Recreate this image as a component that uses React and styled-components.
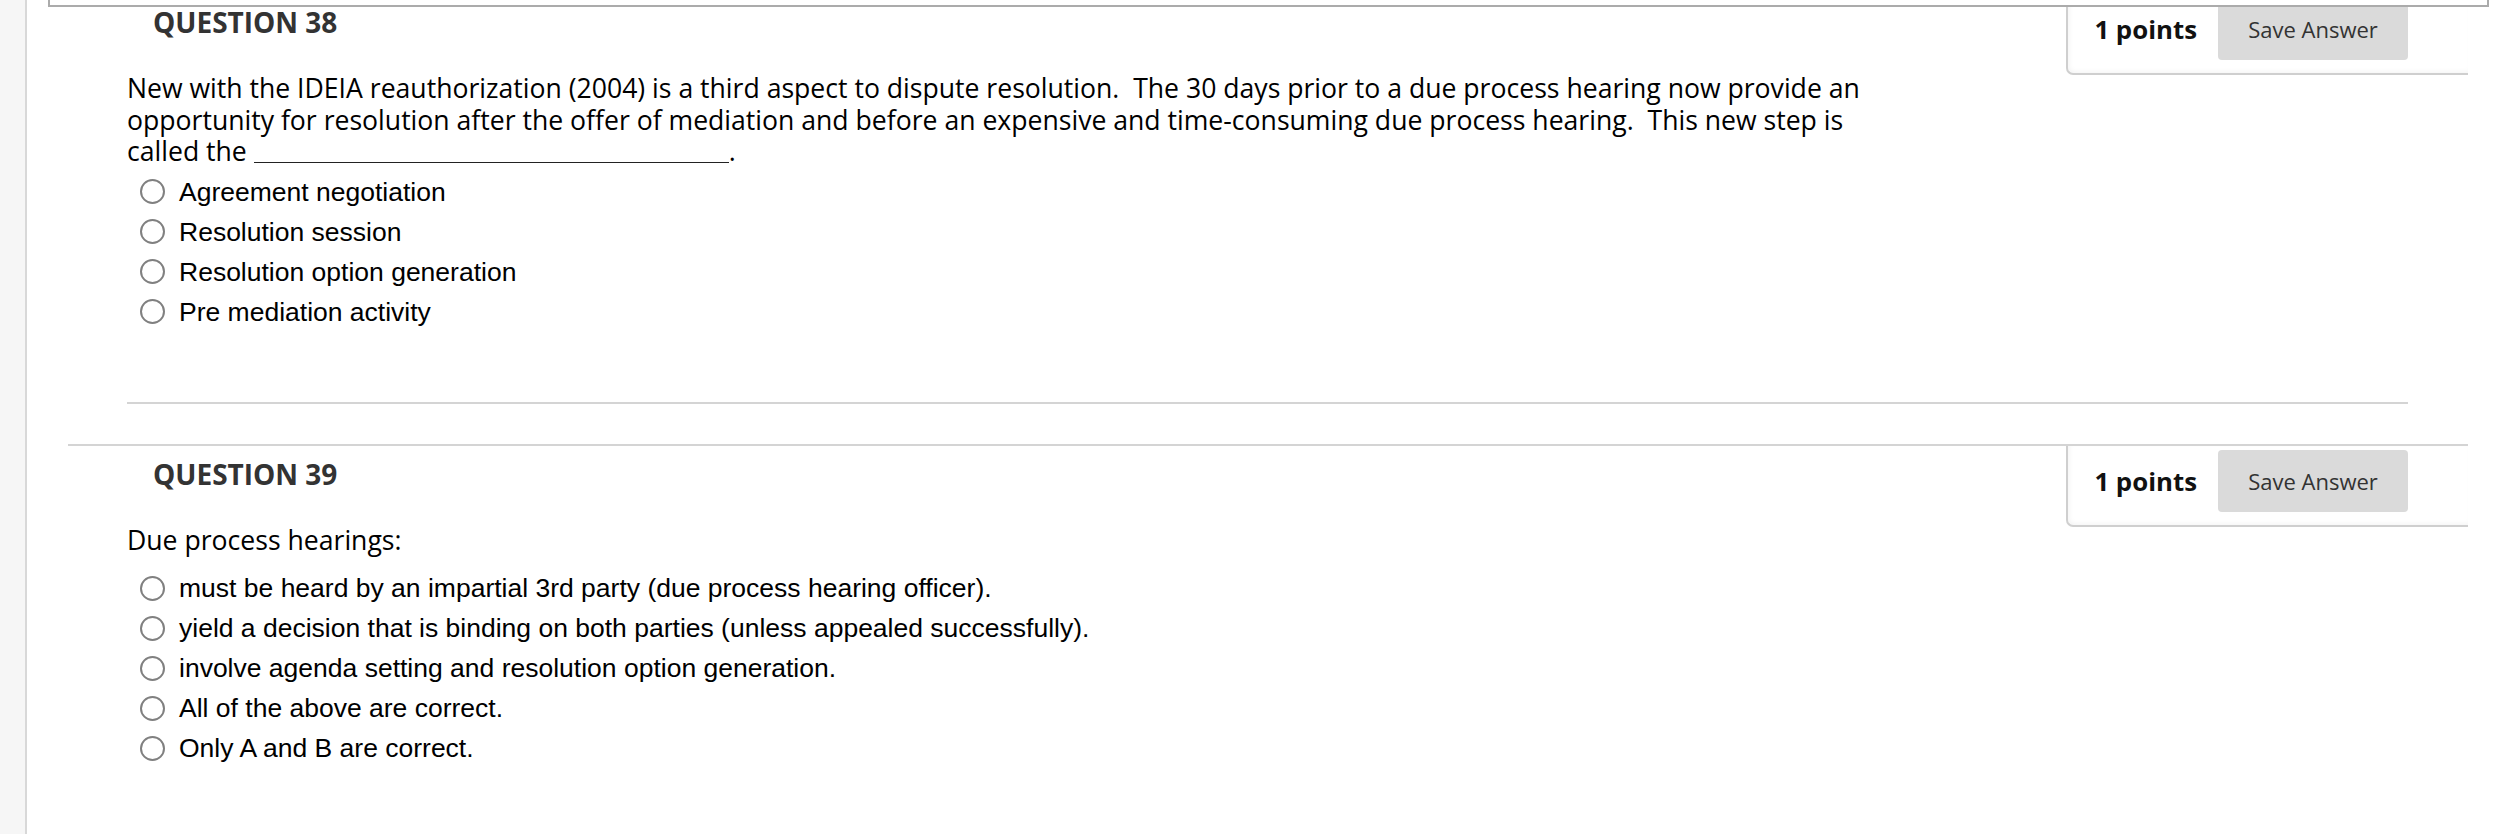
import React from 'react';
import styled, { createGlobalStyle } from 'styled-components';

const GlobalStyle = createGlobalStyle`
    body {
        margin: 0;
        background: #fff;
        overflow: hidden;
    }
    * {
        box-sizing: border-box;
    }
`

const questions = [
    {
        number: 38,
        prompt: (
            <>
                New with the IDEIA reauthorization (2004) is a third aspect to dispute resolution.&nbsp; The 30 days prior to a due process hearing now provide an opportunity for resolution after the offer of mediation and before an expensive and time-consuming due process hearing.&nbsp; This new step is called the <Blank />.
            </>
        ),
        promptGap: 4,
        options: [
            'Agreement negotiation',
            'Resolution session',
            'Resolution option generation',
            'Pre mediation activity',
        ],
    },
    {
        number: 39,
        prompt: 'Due process hearings:',
        promptGap: 12,
        options: [
            'must be heard by an impartial 3rd party (due process hearing officer).',
            'yield a decision that is binding on both parties (unless appealed successfully).',
            'involve agenda setting and resolution option generation.',
            'All of the above are correct.',
            'Only A and B are correct.',
        ],
    },
]

function Blank() {
    return <BlankLine />
}

function Question({ number, prompt, promptGap, options }) {
    return (
        <Section>
            <Header>
                <Heading>QUESTION {number}</Heading>
                <PointsBox>
                    <Points>1 points</Points>
                    <SaveButton>Save Answer</SaveButton>
                </PointsBox>
            </Header>
            <Body>
                <Prompt gap={promptGap}>{prompt}</Prompt>
                <Options>
                    {options.map(option => (
                        <Option key={option}>
                            <Radio />
                            <Label>{option}</Label>
                        </Option>
                    ))}
                </Options>
            </Body>
        </Section>
    )
}

function App() {
    return (
        <Page>
            <GlobalStyle />
            <LeftRail />
            <Main>
                <TopFrame />
                <Content>
                    {questions.map(q => (
                        <Question key={q.number} {...q} />
                    ))}
                </Content>
            </Main>
        </Page>
    )
}

export default App

const Page = styled.div`
    display:flex;
    height:834px;
    overflow:hidden;
`

const LeftRail = styled.div`
    width:27px;
    flex-shrink:0;
    background-color:#f6f6f6;
    border-right:2px solid #d8d8d8;
`

const Main = styled.div`
    position:relative;
    flex:1;
    padding:0 30px 0 41px;
`

const TopFrame = styled.div`
    position:absolute;
    z-index:5;
    top:-10px;
    left:21px;
    right:9px;
    height:17px;
    background-color:white;
    border:2px solid #ababab;
    border-top:none;
`

const Content = styled.div`
    margin-top:-8px;
`

const Section = styled.div`
    border-top:2px solid #d4d4d4;
`

const Header = styled.div`
    display:flex;
    justify-content:space-between;
    align-items:flex-start;
`

const Heading = styled.h3`
    margin:0;
    padding:9px 0 0 85px;
    font-family:"Open Sans", sans-serif;
    font-weight:700;
    font-size:28px;
    color:#333;
`

const PointsBox = styled.div`
    display:flex;
    align-items:center;
    padding:4px 60px 13px 26px;
    background-color:white;
    border-left:2px solid #cfcfcf;
    border-bottom:2px solid #cfcfcf;
    border-bottom-left-radius:7px;
    box-shadow:inset 2px -2px 4px rgba(0,0,0,0.04);
`

const Points = styled.span`
    margin-right:21px;
    font-family:"Open Sans", sans-serif;
    font-weight:700;
    font-size:25.8px;
    color:#111;
`

const SaveButton = styled.button`
    width:190px;
    height:62px;
    border:none;
    border-radius:4px;
    background-color:#dadada;
    font-family:"Open Sans", sans-serif;
    font-size:22px;
    color:#333;
    cursor:pointer;
`

const Body = styled.div`
    margin:0 60px 40px 59px;
    padding-bottom:70px;
    border-bottom:2px solid #d4d4d4;
`

const Prompt = styled.div`
    max-width:1760px;
    margin:-2px 0 ${props => props.gap}px 0;
    font-family:"Open Sans", sans-serif;
    font-size:26.6px;
    line-height:31.5px;
    color:#000;
`

const BlankLine = styled.span`
    display:inline-block;
    width:475px;
    height:6px;
    margin-bottom:-2px;
    border-bottom:1.5px solid #222;
`

const Options = styled.div`
    display:flex;
    flex-direction:column;
    padding-left:13px;
`

const Option = styled.label`
    display:flex;
    align-items:center;
    height:40px;
`

const Radio = styled.span`
    width:25px;
    height:25px;
    margin-right:14px;
    flex-shrink:0;
    border:2px solid #808080;
    border-radius:50%;
    background-color:white;
`

const Label = styled.span`
    font-family:"Liberation Sans", Arial, sans-serif;
    font-size:26.5px;
    line-height:40px;
    color:#000;
`
